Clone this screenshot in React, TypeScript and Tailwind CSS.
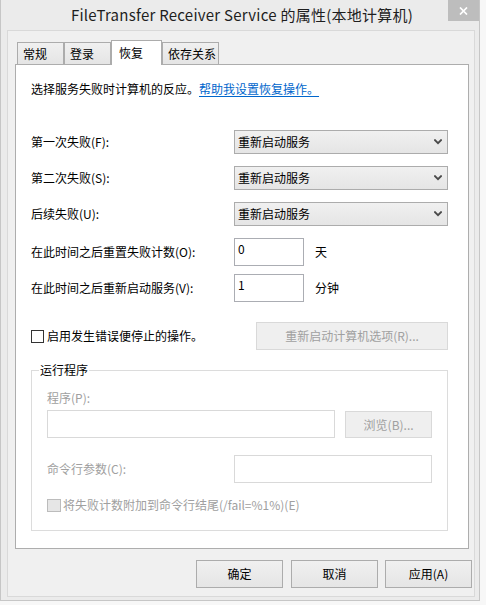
import React from "react";

function Chevron() {
  return (
    <svg width="8" height="6" viewBox="0 0 8 6" className="shrink-0">
      <path d="M1 1.2 L4 4.2 L7 1.2" stroke="#4a4a4a" strokeWidth="1.9" fill="none" strokeLinecap="square" />
    </svg>
  );
}

function Select({ value }: { value: string }) {
  return (
    <div className="w-[214px] h-[24px] border border-[#acacac] bg-linear-to-b from-[#f0f0f0] to-[#e5e5e5] flex items-center justify-between pl-[3px] pr-[5px]">
      <span>{value}</span>
      <Chevron />
    </div>
  );
}

function Tab({ label, w }: { label: string; w: string }) {
  return (
    <div className={`${w} h-[22px] border-t border-x border-[#acacac] bg-linear-to-b from-[#f0f0f0] to-[#e5e5e5] flex items-center pl-[5px]`}>
      {label}
    </div>
  );
}

function DlgButton({ label, cls }: { label: string; cls?: string }) {
  return (
    <div className={`w-[87px] h-[28px] border border-[#acacac] bg-linear-to-b from-[#f0f0f0] to-[#e5e5e5] flex items-center justify-center ${cls ?? ""}`}>
      {label}
    </div>
  );
}

export default function App() {
  return (
    <div className="w-[486px] h-[605px] bg-[#f7f7f7] font-['Noto_Sans_CJK_SC','Microsoft_YaHei',sans-serif] text-[12px] leading-[16px] text-black">
      <div className="w-[480px] h-[601px] bg-[#ebebeb] border-x border-b border-[#c6c6c6] flex flex-col relative">
        <div className="h-[30px] flex items-center justify-center text-[15px] leading-[20px] tracking-[0.25px] text-[#1e1e1e] pl-[4px]">
          FileTransfer Receiver Service 的属性(本地计算机)
        </div>
        <div className="absolute top-0 right-0 w-[31px] h-[21px] bg-[#bdbdbd] flex items-center justify-center">
          <svg width="9" height="8" viewBox="0 0 9 8">
            <path d="M1 0.5 L8 7.5 M8 0.5 L1 7.5" stroke="#ffffff" strokeWidth="1.7" />
          </svg>
        </div>

        <div className="ml-[6px] w-[468px] h-[567px] border border-[#d9d9d9] bg-[#f0f0f0] flex flex-col">
          <div className="flex items-end h-[24px] ml-[9px] mt-[9px]">
            <Tab label="常规" w="w-[47px]" />
            <Tab label="登录" w="w-[47px]" />
            <div className="relative z-10 w-[51px] h-[25px] -mb-px border-t border-x border-[#acacac] bg-white pl-[7px] pt-[4px]">
              恢复
            </div>
            <Tab label="依存关系" w="w-[57px]" />
          </div>

          <div className="ml-[7px] w-[454px] h-[485px] border border-[#adadad] bg-white pl-[15px] pr-[20px] flex flex-col">
            <div className="mt-[16px] h-[16px]">
              选择服务失败时计算机的反应。
              <span className="text-[#0066cc] underline underline-offset-[2px]">帮助我设置恢复操作。</span>
            </div>

            <div className="flex items-center mt-[33px] h-[24px]">
              <div className="w-[203px]">第一次失败(F):</div>
              <Select value="重新启动服务" />
            </div>
            <div className="flex items-center mt-[12px] h-[24px]">
              <div className="w-[203px]">第二次失败(S):</div>
              <Select value="重新启动服务" />
            </div>
            <div className="flex items-center mt-[12px] h-[24px]">
              <div className="w-[203px]">后续失败(U):</div>
              <Select value="重新启动服务" />
            </div>

            <div className="flex items-center mt-[12px] h-[28px]">
              <div className="w-[203px]">在此时间之后重置失败计数(O):</div>
              <div className="w-[70px] h-[28px] border border-[#abadb3] bg-white pl-[3px] pt-[2px]">0</div>
              <span className="ml-[11px]">天</span>
            </div>
            <div className="flex items-center mt-[8px] h-[28px]">
              <div className="w-[203px]">在此时间之后重新启动服务(V):</div>
              <div className="w-[70px] h-[28px] border border-[#abadb3] bg-white pl-[3px] pt-[2px]">1</div>
              <span className="ml-[11px]">分钟</span>
            </div>

            <div className="flex items-center mt-[20px] h-[28px]">
              <div className="w-[13px] h-[13px] border border-[#333333] bg-white" />
              <span className="ml-[3px]">启用发生错误便停止的操作。</span>
              <div className="ml-auto w-[192px] h-[28px] border border-[#d9d9d9] bg-[#efefef] text-[#a0a0a0] flex items-center justify-center">
                重新启动计算机选项(R)...
              </div>
            </div>

            <fieldset className="mt-[12px] w-[417px] border border-[#dcdcdc] p-0 m-0 min-w-0">
              <legend className="ml-[7px] px-[1px] text-black">运行程序</legend>
              <div className="px-[15px] pb-[17px] flex flex-col text-[#a0a0a0]">
                <div className="mt-[12px] h-[16px]">程序(P):</div>
                <div className="flex items-start mt-[4px]">
                  <div className="w-[289px] h-[28px] border border-[#d9d9d9] bg-white" />
                  <div className="ml-[10px] mt-[1px] w-[87px] h-[27px] border border-[#d9d9d9] bg-[#efefef] flex items-center justify-center">
                    浏览(B)...
                  </div>
                </div>
                <div className="flex items-center mt-[17px] h-[28px]">
                  <div className="w-[187px]">命令行参数(C):</div>
                  <div className="w-[199px] h-[28px] border border-[#d9d9d9] bg-white" />
                </div>
                <div className="flex items-center mt-[14px] h-[16px]">
                  <div className="w-[14px] h-[13px] border border-[#bcbcbc] bg-[#e6e6e6]" />
                  <span className="ml-[2px]">将失败计数附加到命令行结尾(/fail=%1%)(E)</span>
                </div>
              </div>
            </fieldset>
          </div>

          <div className="flex mt-[11px] ml-[188px]">
            <DlgButton label="确定" />
            <DlgButton label="取消" cls="ml-[8px]" />
            <DlgButton label="应用(A)" cls="ml-[7px]" />
          </div>
        </div>
      </div>
    </div>
  );
}
